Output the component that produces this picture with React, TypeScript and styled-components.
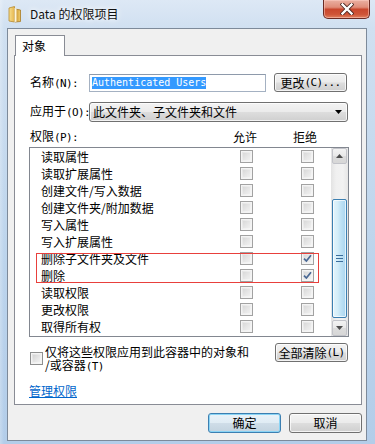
import React from "react";
import styled, { createGlobalStyle } from "styled-components";

const Global = createGlobalStyle`
  html, body { margin: 0; padding: 0; background: #fff; }
  body {
    width: 375px; height: 444px; overflow: hidden;
    font-family: "Noto Sans CJK SC", "Liberation Sans", sans-serif;
    font-size: 12px; color: #000;
  }
  * { box-sizing: border-box; }
`;

const Window = styled.div`
  width: 375px;
  height: 444px;
  display: flex;
  flex-direction: column;
  background:
    linear-gradient(90deg, rgba(255,255,255,0.25) 0, rgba(255,255,255,0) 4px),
    linear-gradient(180deg, #dde8f5 0%, #d0e0f1 28px, #bcd4ec 60%, #b3cde9 100%);
`;

const TitleBar = styled.div`
  height: 28px;
  flex: none;
  display: flex;
  align-items: flex-start;
  padding-left: 8px;
`;

const FolderIcon = styled.svg`
  margin-top: 6px;
  flex: none;
`;

const Title = styled.div`
  margin-left: 8px;
  margin-top: 5px;
  font-size: 12px;
  line-height: 17px;
  color: #111;
  text-shadow: 0 0 5px #fff, 0 0 8px rgba(255,255,255,0.9);
`;

const CloseButton = styled.div`
  margin-left: auto;
  margin-right: 5px;
  width: 47px;
  height: 19px;
  border: 1px solid #6a2b24;
  border-top: none;
  border-radius: 0 0 5px 5px;
  background: linear-gradient(180deg, #eab0a2 0%, #e08d79 40%, #c9472d 52%, #cf5538 80%, #e0805f 100%);
  box-shadow: inset 0 0 0 1px rgba(255, 210, 200, 0.5);
  display: flex;
  align-items: center;
  justify-content: center;
`;

const FrameBody = styled.div`
  flex: 1;
  display: flex;
  padding: 0 8px 3px 7px;
`;

const Client = styled.div`
  flex: 1;
  background: #f0f0f0;
  border: 1px solid #7d8a9a;
  display: flex;
  flex-direction: column;
  padding: 6px 4px 7px 6px;
`;

const Tab = styled.div`
  align-self: flex-start;
  margin-left: 1px;
  width: 50px;
  height: 21px;
  border: 1px solid #898c95;
  border-bottom: none;
  background: #fff;
  margin-bottom: -1px;
  position: relative;
  z-index: 1;
  padding-left: 6px;
  line-height: 20px;
`;

const Panel = styled.div`
  width: 348px;
  height: 350px;
  flex: none;
  border: 1px solid #898c95;
  background: #fff;
  padding: 17px 13px 0 15px;
  display: flex;
  flex-direction: column;
`;

const Half = styled.span`
  font-family: "DejaVu Sans Mono", "Liberation Mono", monospace;
  font-size: 11px;
  letter-spacing: -0.6px;
`;

const FormRow = styled.div<{ $mt?: number }>`
  display: flex;
  align-items: center;
  margin-top: ${(p) => p.$mt ?? 0}px;
`;

const Label = styled.div`
  width: 59px;
  flex: none;
  white-space: nowrap;
  line-height: 14px;
`;

const TextField = styled.div`
  width: 177px;
  height: 18px;
  align-self: flex-end;
  border: 1px solid #a4b1c2;
  border-top-color: #8e9aab;
  background: #fff;
  padding: 2px 0 0 2px;
  display: flex;
  align-items: flex-start;
`;

const Selected = styled.span`
  background: #3399ff;
  color: #fff;
  font-family: "DejaVu Sans Mono", "Liberation Mono", monospace;
  font-size: 10px;
  line-height: 12px;
  height: 12px;
  white-space: nowrap;
`;

const Button = styled.div<{ $w?: number; $default?: boolean; $h?: number }>`
  width: ${(p) => p.$w ?? 73}px;
  height: ${(p) => p.$h ?? 19}px;
  flex: none;
  border: 1px solid ${(p) => (p.$default ? "#3c7fb1" : "#707070")};
  border-radius: 3px;
  background: ${(p) =>
    p.$default
      ? "linear-gradient(180deg, #eaf3f9 0%, #e0ecf4 48%, #cfdde8 52%, #c3d3df 100%)"
      : "linear-gradient(180deg, #f3f3f3 0%, #ebebeb 48%, #dddddd 52%, #cfcfcf 100%)"};
  box-shadow: inset 0 0 0 1px ${(p) => (p.$default ? "#8ad4f5" : "rgba(255,255,255,0.75)")};
  display: flex;
  align-items: center;
  justify-content: center;
  white-space: nowrap;
  line-height: 14px;
`;

const ChangeButton = styled(Button)`
  margin-left: 8px;
`;

const Select = styled.div`
  width: 259px;
  height: 20px;
  border: 1px solid #707070;
  border-radius: 3px;
  background: linear-gradient(180deg, #f3f3f3 0%, #ebebeb 48%, #dddddd 52%, #cfcfcf 100%);
  box-shadow: inset 0 0 0 1px rgba(255,255,255,0.75);
  display: flex;
  align-items: center;
  padding: 0 5px 0 3px;
  line-height: 14px;
`;

const SelectText = styled.span`
  flex: 1;
  white-space: nowrap;
`;

const HeaderRow = styled.div`
  display: flex;
  margin-top: 9px;
  height: 12px;
  line-height: 12px;
  align-items: center;
`;

const HeaderCell = styled.div<{ $w: number }>`
  width: ${(p) => p.$w}px;
  flex: none;
  white-space: nowrap;
`;

const ListBox = styled.div`
  margin: 4px -1px 0 -1px;
  height: 190px;
  flex: none;
  border: 1px solid #828790;
  display: flex;
  background: #fff;
`;

const Rows = styled.div`
  flex: 1;
  display: flex;
  flex-direction: column;
`;

const RedGroup = styled.div`
  position: relative;
  display: flex;
  flex-direction: column;
  &::after {
    content: "";
    position: absolute;
    left: 6px;
    right: 12px;
    top: 3px;
    bottom: 1px;
    border: 1px solid #e8403c;
    pointer-events: none;
  }
`;

const ListRow = styled.div`
  height: 17px;
  flex: none;
  display: flex;
  align-items: center;
  padding-left: 11px;
`;

const RowName = styled.div`
  width: 199px;
  flex: none;
  white-space: nowrap;
  line-height: 14px;
`;

const Check = styled.div<{ $gap?: number; $enabled?: boolean }>`
  width: 13px;
  height: 13px;
  flex: none;
  margin-left: ${(p) => p.$gap ?? 0}px;
  border: 1px solid ${(p) => (p.$enabled ? "#8e8f8f" : "#a2a2a2")};
  background: ${(p) =>
    p.$enabled
      ? "linear-gradient(135deg, #cbcbcb 0%, #e6e6e6 55%, #f7f7f7 100%)"
      : "linear-gradient(135deg, #d2d2d2 0%, #e7e7e7 55%, #f5f5f5 100%)"};
  box-shadow: inset 0 0 0 1px #f4f4f4, inset 0 0 0 2px rgba(255,255,255,0.35);
  display: flex;
  align-items: center;
  justify-content: center;
`;

const ScrollBar = styled.div`
  width: 17px;
  flex: none;
  display: flex;
  flex-direction: column;
  padding: 0 1px;
  background: linear-gradient(90deg, #e3e3e3 0%, #f0f0f0 30%, #f2f2f2 70%, #e6e6e6 100%);
`;

const ScrollButton = styled.div`
  height: 16px;
  flex: none;
  border: 1px solid #c2c3c9;
  border-radius: 2px;
  background: linear-gradient(180deg, #f3f3f3 0%, #e8e8e8 50%, #dcdcdc 51%, #d7d7d7 100%);
  display: flex;
  align-items: center;
  justify-content: center;
`;

const Thumb = styled.div`
  margin-top: 35px;
  height: 119px;
  flex: none;
  border: 1px solid #3c7fb1;
  border-radius: 2px;
  background: linear-gradient(90deg, #e3f4fc 0%, #d5eef9 35%, #bfe2f5 60%, #aad5ef 100%);
  box-shadow: inset 0 0 0 1px rgba(255,255,255,0.7);
  display: flex;
  align-items: center;
  justify-content: center;
`;

const TrackFill = styled.div`
  flex: 1;
`;

const BottomRow = styled.div`
  display: flex;
  align-items: flex-start;
  margin-top: 6px;
  height: 29px;
`;

const BigCheck = styled(Check)`
  margin-top: 9px;
`;

const LongLabel = styled.div`
  margin-left: 2px;
  margin-top: 3px;
  display: flex;
  flex-direction: column;
`;

const LabelLine = styled.div`
  height: 12px;
  line-height: 12px;
  white-space: nowrap;
  & + & {
    margin-top: 1px;
  }
`;

const ClearButton = styled(Button)`
  margin-left: auto;
`;

const Link = styled.a`
  margin-top: 13px;
  margin-left: -1px;
  line-height: 12px;
  color: #0066cc;
  text-decoration: underline;
  align-self: flex-start;
`;

const Footer = styled.div`
  display: flex;
  justify-content: flex-end;
  gap: 8px;
  margin-top: 8px;
`;

const CheckMark = () => (
  <svg width="9" height="9" viewBox="0 0 9 9">
    <path d="M1 4.6 L3.4 7 L8 1.2" fill="none" stroke="#4a6894" strokeWidth="1.7" />
  </svg>
);

const ArrowUp = () => (
  <svg width="7" height="4" viewBox="0 0 7 4">
    <path d="M0 4 L3.5 0 L7 4 Z" fill="#4d4d4d" />
  </svg>
);

const ArrowDown = () => (
  <svg width="7" height="4" viewBox="0 0 7 4">
    <path d="M0 0 L7 0 L3.5 4 Z" fill="#4d4d4d" />
  </svg>
);

const Grip = () => (
  <svg width="7" height="7" viewBox="0 0 7 7">
    <path d="M0 0.5 H7 M0 3.5 H7 M0 6.5 H7" stroke="#3c6e9c" strokeWidth="1" />
  </svg>
);

type Perm = { name: string; deny?: boolean };

const before: Perm[] = [
  { name: "读取属性" },
  { name: "读取扩展属性" },
  { name: "创建文件/写入数据" },
  { name: "创建文件夹/附加数据" },
  { name: "写入属性" },
  { name: "写入扩展属性" },
];
const marked: Perm[] = [
  { name: "删除子文件夹及文件", deny: true },
  { name: "删除", deny: true },
];
const after: Perm[] = [
  { name: "读取权限" },
  { name: "更改权限" },
  { name: "取得所有权" },
];

const PermRow = ({ p }: { p: Perm }) => (
  <ListRow>
    <RowName>{p.name}</RowName>
    <Check />
    <Check $gap={48}>{p.deny ? <CheckMark /> : null}</Check>
  </ListRow>
);

export default function App() {
  return (
    <>
      <Global />
      <Window>
        <TitleBar>
          <FolderIcon width="14" height="17" viewBox="0 0 14 17">
            <defs>
              <linearGradient id="fb" x1="0" x2="1" y1="0" y2="0">
                <stop offset="0" stopColor="#f7df8f" />
                <stop offset="1" stopColor="#e6b64d" />
              </linearGradient>
              <linearGradient id="ff" x1="0" x2="1" y1="0" y2="0">
                <stop offset="0" stopColor="#c48f2a" />
                <stop offset="1" stopColor="#f1cd6a" />
              </linearGradient>
            </defs>
            <path d="M1 2 L6.5 0.5 L6.5 16 L1 15 Z" fill="url(#fb)" stroke="#b88a2e" strokeWidth="0.8" />
            <path d="M7 3 L12.5 4 L12.5 15.5 L7 16 Z" fill="url(#ff)" stroke="#a87a22" strokeWidth="0.8" />
            <path d="M6.5 2 L8.5 2.5 L8.5 15.8 L6.5 16 Z" fill="#fff6d8" />
          </FolderIcon>
          <Title>Data 的权限项目</Title>
          <CloseButton>
            <svg width="14" height="12" viewBox="0 0 14 12">
              <path d="M2.5 1.5 L11.5 10.5 M11.5 1.5 L2.5 10.5" stroke="#4a2520" strokeWidth="4" strokeLinecap="square" />
              <path d="M2.5 1.5 L11.5 10.5 M11.5 1.5 L2.5 10.5" stroke="#fff" strokeWidth="2.4" strokeLinecap="square" />
            </svg>
          </CloseButton>
        </TitleBar>
        <FrameBody>
          <Client>
            <Tab>对象</Tab>
            <Panel>
              <FormRow>
                <Label>名称<Half>(N):</Half></Label>
                <TextField>
                  <Selected>Authenticated Users</Selected>
                </TextField>
                <ChangeButton>更改<Half>(C)...</Half></ChangeButton>
              </FormRow>
              <FormRow $mt={10}>
                <Label>应用于<Half>(O):</Half></Label>
                <Select>
                  <SelectText>此文件夹、子文件夹和文件</SelectText>
                  <svg width="7" height="4" viewBox="0 0 7 4">
                    <path d="M0 0 L7 0 L3.5 4 Z" fill="#000" />
                  </svg>
                </Select>
              </FormRow>
              <HeaderRow>
                <HeaderCell $w={203}>权限<Half>(P):</Half></HeaderCell>
                <HeaderCell $w={60}>允许</HeaderCell>
                <HeaderCell $w={30}>拒绝</HeaderCell>
              </HeaderRow>
              <ListBox>
                <Rows>
                  {before.map((p) => (
                    <PermRow key={p.name} p={p} />
                  ))}
                  <RedGroup>
                    {marked.map((p) => (
                      <PermRow key={p.name} p={p} />
                    ))}
                  </RedGroup>
                  {after.map((p) => (
                    <PermRow key={p.name} p={p} />
                  ))}
                </Rows>
                <ScrollBar>
                  <ScrollButton>
                    <ArrowUp />
                  </ScrollButton>
                  <Thumb>
                    <Grip />
                  </Thumb>
                  <TrackFill />
                  <ScrollButton>
                    <ArrowDown />
                  </ScrollButton>
                </ScrollBar>
              </ListBox>
              <BottomRow>
                <BigCheck $enabled />
                <LongLabel>
                  <LabelLine>仅将这些权限应用到此容器中的对象和</LabelLine>
                  <LabelLine>/或容器<Half>(T)</Half></LabelLine>
                </LongLabel>
                <ClearButton>全部清除<Half>(L)</Half></ClearButton>
              </BottomRow>
              <Link>管理权限</Link>
            </Panel>
            <Footer>
              <Button $default $h={20}>确定</Button>
              <Button $h={20}>取消</Button>
            </Footer>
          </Client>
        </FrameBody>
      </Window>
    </>
  );
}
